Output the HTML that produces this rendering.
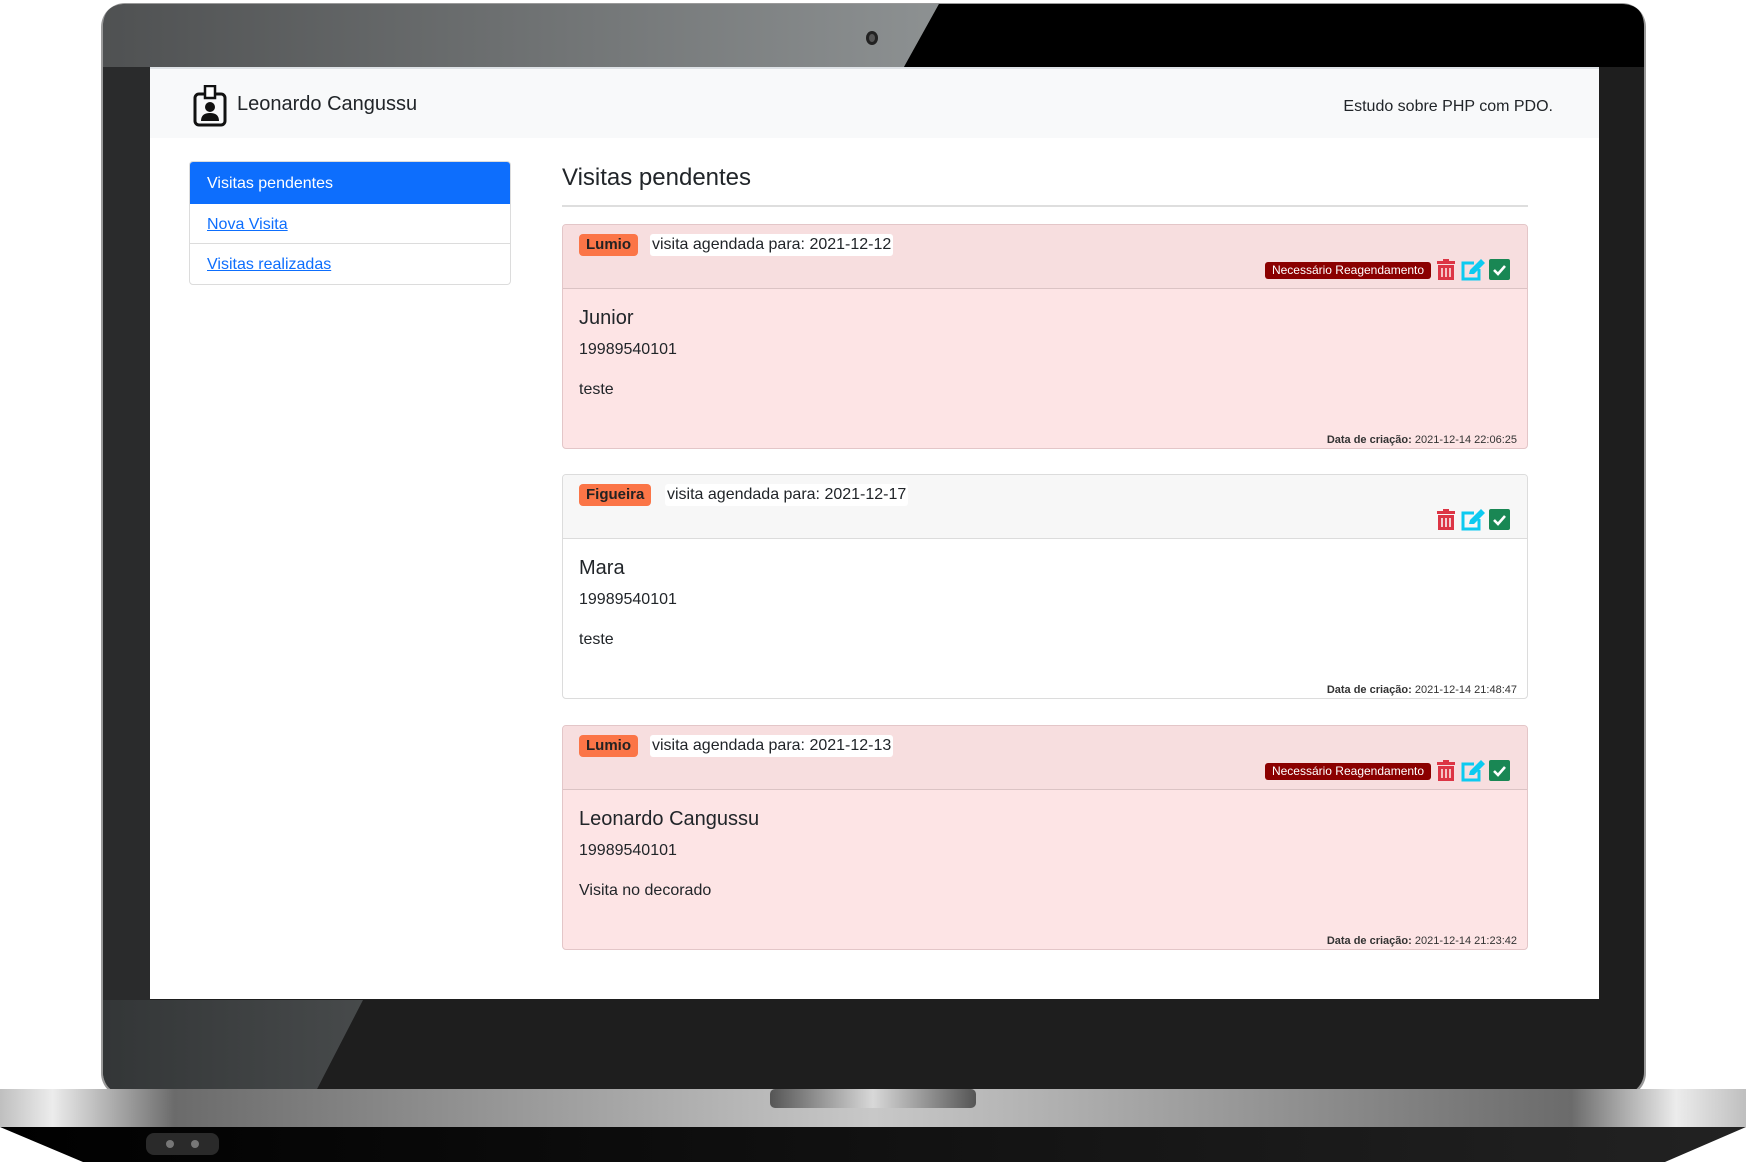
<!DOCTYPE html>
<html><head><meta charset="utf-8"><style>
*{margin:0;padding:0;box-sizing:border-box}
body{width:1746px;height:1162px;background:#fff;position:relative;overflow:hidden;font-family:"Liberation Sans",sans-serif;color:#212529}
.a{position:absolute}
.screen{left:150px;top:67px;width:1449px;height:932px;background:#fff;overflow:hidden}
.nav{left:0;top:0;width:1449px;height:71px;background:#f8f9fa;border-top:2px solid #dee2e6}
.card{left:412px;width:966px;height:225px;border:1px solid #e3c6c8;border-radius:4px;background:#fde4e5;overflow:hidden}
.card.w{background:#fff;border-color:#dcdcdc}
.ch{left:0;top:0;width:100%;height:64px;background:#f7dedf;border-bottom:1px solid #dbc3c4}
.w .ch{background:#f7f7f7;border-color:#dcdcdc}
.tag{left:16px;top:9px;height:22px;padding:0 7px;background:#fb7547;border-radius:4px;font-weight:bold;font-size:15px;line-height:22px;color:#222}
.dt{top:9px;height:22px;padding:0 2px;background:#fff;border-radius:3px;font-size:16px;line-height:22px}
.nr{left:702px;top:37px;width:166px;height:17px;background:#8b0000;color:#fff;border-radius:3px;font-size:12px;line-height:17px;text-align:center}
.ic{top:34px}
.nm{left:16px;top:82px;font-size:20px}
.ph{left:16px;top:116px;font-size:16px}
.ds{left:16px;top:156px;font-size:16px}
.cr{right:10px;top:209px;font-size:11px;color:#333}
</style></head><body>
<svg class="a" style="left:0;top:0" width="1746" height="1162">
<defs>
<linearGradient id="g1" x1="0" x2="1"><stop offset="0" stop-color="#4f5152"/><stop offset="1" stop-color="#8d9192"/></linearGradient>
<linearGradient id="g2" x1="0" x2="1"><stop offset="0" stop-color="#bfbfbf"/><stop offset=".03" stop-color="#ececec"/><stop offset=".1" stop-color="#6b6b6b"/><stop offset=".5" stop-color="#c8c8c8"/><stop offset=".9" stop-color="#6b6b6b"/><stop offset=".96" stop-color="#ececec"/><stop offset="1" stop-color="#bfbfbf"/></linearGradient>
<linearGradient id="g3" x1="0" x2="1"><stop offset="0" stop-color="#000"/><stop offset="1" stop-color="#222"/></linearGradient>
<linearGradient id="g4" x1="0" x2="1"><stop offset="0" stop-color="#555"/><stop offset=".5" stop-color="#d8d8d8"/><stop offset="1" stop-color="#555"/></linearGradient>
<linearGradient id="g5" x1="0" x2="1"><stop offset="0" stop-color="#333637"/><stop offset="1" stop-color="#474a4b"/></linearGradient>
</defs>
<rect x="101" y="3" width="1545" height="1094" rx="24" fill="#9a9a9a"/>
<rect x="103" y="4" width="1541" height="1091" rx="23" fill="#1e1e1e"/>
<path d="M126 4 H939 L904 67 H103 V27 Q103 4 126 4Z" fill="url(#g1)"/>
<path d="M939 4 H1621 Q1644 4 1644 27 V67 H904Z" fill="#000"/>
<path d="M103 67 H150 V1000 H103Z" fill="#2a2b2c"/>
<path d="M150 1000 H363 L315 1093 H125 Q103 1093 103 1070 V1000Z" fill="url(#g5)"/>
<ellipse cx="872" cy="38" rx="6" ry="7" fill="#222"/><ellipse cx="872" cy="38" rx="3" ry="4" fill="#555"/>
<rect x="0" y="1089" width="1746" height="38" fill="url(#g2)"/>
<rect x="770" y="1089" width="206" height="19" rx="5" fill="url(#g4)"/>
<polygon points="0,1127 1746,1127 1665,1162 83,1162" fill="url(#g3)"/>
<rect x="146" y="1133" width="73" height="22" rx="8" fill="#2a2a2a"/>
<circle cx="170" cy="1144" r="4" fill="#777"/><circle cx="195" cy="1144" r="4" fill="#777"/>
</svg>
<div class="a screen">
 <div class="a nav">
  <svg class="a" style="left:43px;top:16px" width="34" height="42" viewBox="0 0 34 42"><rect x="2" y="9" width="30" height="31" rx="4" fill="none" stroke="#111" stroke-width="3"/><rect x="12" y="1" width="10" height="12" fill="#fff" stroke="#111" stroke-width="2.5"/><circle cx="17" cy="22" r="5" fill="#111"/><path d="M8 36 Q8 28 17 28 Q26 28 26 36Z" fill="#111"/></svg>
  <div class="a" style="left:87px;top:24px;font-size:20px">Leonardo Cangussu</div>
  <div class="a" style="right:46px;top:29px;font-size:16px">Estudo sobre PHP com PDO.</div>
 </div>
 <div class="a" style="left:39px;top:94px;width:322px;height:124px;border:1px solid #dcdcdc;border-radius:4px;overflow:hidden;font-size:16px">
  <div style="height:42px;background:#0d6efd;color:#fff;padding:13px 17px 0">Visitas pendentes</div>
  <div style="height:40px;border-bottom:1px solid #dcdcdc;padding:12px 17px 0;color:#0d6efd;text-decoration:underline">Nova Visita</div>
  <div style="height:40px;padding:12px 17px 0;color:#0d6efd;text-decoration:underline">Visitas realizadas</div>
 </div>
 <div class="a" style="left:412px;top:97px;font-size:24px">Visitas pendentes</div>
 <div class="a" style="left:412px;top:138px;width:966px;height:2px;background:#dedede"></div>

 <div class="a card" style="top:157px"><div class="a ch"></div>
  <div class="a tag">Lumio</div><div class="a dt" style="left:87px">visita agendada para: 2021-12-12</div>
  <div class="a nr">Necessário Reagendamento</div>
  <svg class="a ic" style="left:873px" width="20" height="22" viewBox="0 0 20 22"><rect x="1" y="2" width="18" height="3" fill="#dc3545"/><rect x="7" y="0" width="6" height="3" fill="#dc3545"/><rect x="2" y="6" width="16" height="15" fill="#dc3545"/><path d="M6 9V18M10 9V18M14 9V18" stroke="#fde4e5" stroke-width="1.6"/></svg>
  <svg class="a ic" style="left:897px" width="26" height="22" viewBox="0 0 26 22"><path d="M14 4H3V20H19V10" fill="none" stroke="#0dcaf0" stroke-width="3"/><path d="M9 15L10 11L21 0L25 4L14 15Z" fill="#0dcaf0"/></svg>
  <svg class="a ic" style="left:926px" width="21" height="21" viewBox="0 0 21 21"><rect width="21" height="21" rx="2" fill="#198754"/><path d="M5 11L9 15L16 7" fill="none" stroke="#fff" stroke-width="2.6"/></svg>
  <div class="a nm">Junior</div><div class="a ph">19989540101</div><div class="a ds">teste</div>
  <div class="a cr"><b>Data de criação:</b> 2021-12-14 22:06:25</div>
 </div>

 <div class="a card w" style="top:407px"><div class="a ch"></div>
  <div class="a tag">Figueira</div><div class="a dt" style="left:102px">visita agendada para: 2021-12-17</div>
  <svg class="a ic" style="left:873px" width="20" height="22" viewBox="0 0 20 22"><rect x="1" y="2" width="18" height="3" fill="#dc3545"/><rect x="7" y="0" width="6" height="3" fill="#dc3545"/><rect x="2" y="6" width="16" height="15" fill="#dc3545"/><path d="M6 9V18M10 9V18M14 9V18" stroke="#f7f7f7" stroke-width="1.6"/></svg>
  <svg class="a ic" style="left:897px" width="26" height="22" viewBox="0 0 26 22"><path d="M14 4H3V20H19V10" fill="none" stroke="#0dcaf0" stroke-width="3"/><path d="M9 15L10 11L21 0L25 4L14 15Z" fill="#0dcaf0"/></svg>
  <svg class="a ic" style="left:926px" width="21" height="21" viewBox="0 0 21 21"><rect width="21" height="21" rx="2" fill="#198754"/><path d="M5 11L9 15L16 7" fill="none" stroke="#fff" stroke-width="2.6"/></svg>
  <div class="a nm">Mara</div><div class="a ph">19989540101</div><div class="a ds">teste</div>
  <div class="a cr"><b>Data de criação:</b> 2021-12-14 21:48:47</div>
 </div>

 <div class="a card" style="top:658px"><div class="a ch"></div>
  <div class="a tag">Lumio</div><div class="a dt" style="left:87px">visita agendada para: 2021-12-13</div>
  <div class="a nr">Necessário Reagendamento</div>
  <svg class="a ic" style="left:873px" width="20" height="22" viewBox="0 0 20 22"><rect x="1" y="2" width="18" height="3" fill="#dc3545"/><rect x="7" y="0" width="6" height="3" fill="#dc3545"/><rect x="2" y="6" width="16" height="15" fill="#dc3545"/><path d="M6 9V18M10 9V18M14 9V18" stroke="#fde4e5" stroke-width="1.6"/></svg>
  <svg class="a ic" style="left:897px" width="26" height="22" viewBox="0 0 26 22"><path d="M14 4H3V20H19V10" fill="none" stroke="#0dcaf0" stroke-width="3"/><path d="M9 15L10 11L21 0L25 4L14 15Z" fill="#0dcaf0"/></svg>
  <svg class="a ic" style="left:926px" width="21" height="21" viewBox="0 0 21 21"><rect width="21" height="21" rx="2" fill="#198754"/><path d="M5 11L9 15L16 7" fill="none" stroke="#fff" stroke-width="2.6"/></svg>
  <div class="a nm">Leonardo Cangussu</div><div class="a ph">19989540101</div><div class="a ds">Visita no decorado</div>
  <div class="a cr"><b>Data de criação:</b> 2021-12-14 21:23:42</div>
 </div>
</div>
</body></html>
